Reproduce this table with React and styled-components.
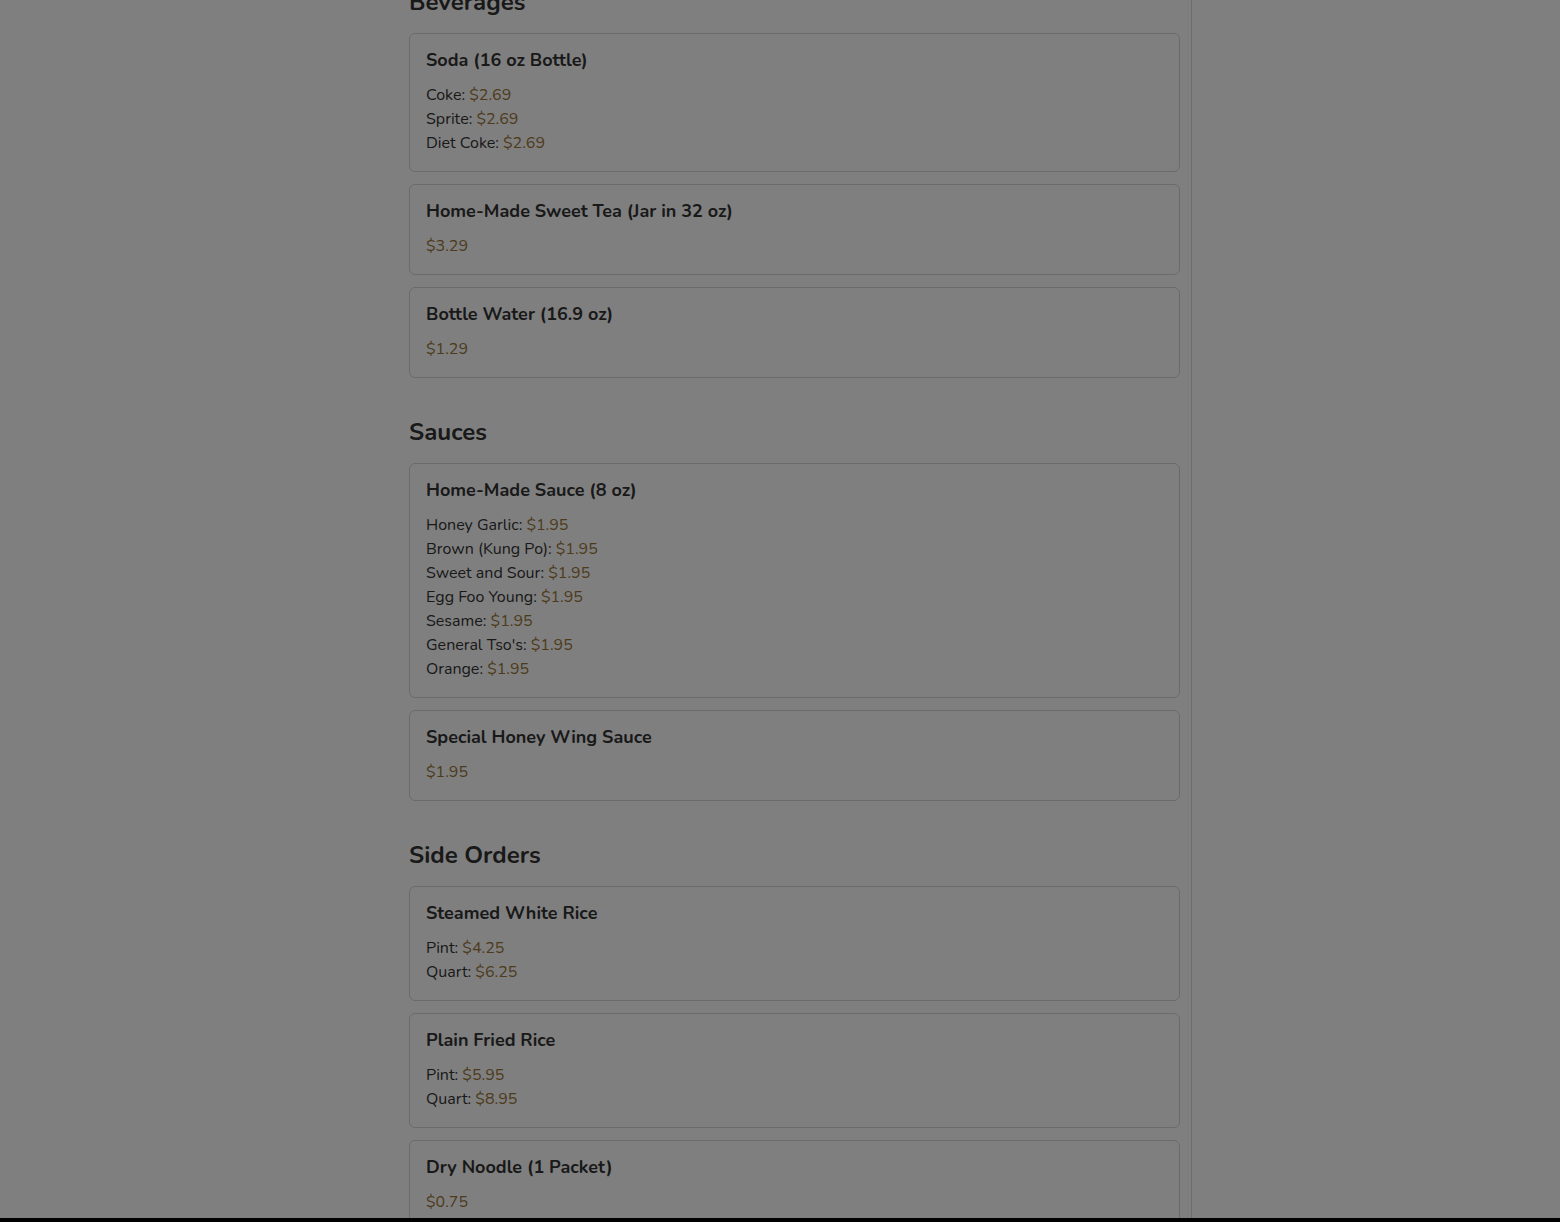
import React from 'react';
import styled, { createGlobalStyle } from 'styled-components';

const GlobalStyle = createGlobalStyle`
  html, body {
    margin: 0;
    padding: 0;
    background: #ffffff;
    overflow: hidden;
  }
  body {
    font-family: 'Nunito', 'Lato', 'Noto Sans', sans-serif;
    color: #333333;
  }
`;

const Page = styled.div`
  display: grid;
  grid-template-columns: 1192px 1fr;
  height: 100vh;
  overflow: hidden;
`;

const Main = styled.main`
  position: relative;
  padding: 0 11px 0 409px;
  border-right: 1px solid #d8d8d8;
  &::after {
    content: '';
    position: absolute;
    top: 0;
    bottom: 0;
    right: 3px;
    width: 1px;
    background: #f6f6f6;
  }
`;

const Menu = styled.div`
  margin-top: -13px;
`;

const Section = styled.section`
  & + & {
    margin-top: 39px;
  }
`;

const SectionTitle = styled.h2`
  margin: 0 0 16px;
  font-size: 24px;
  line-height: 30px;
  font-weight: 700;
  color: #333333;
`;

const CardList = styled.div`
  display: flex;
  flex-direction: column;
  gap: 12px;
`;

const Card = styled.div`
  border: 1px solid #d6d6d6;
  border-radius: 6px;
  padding: 16px;
  background: #ffffff;
`;

const CardTitle = styled.h3`
  margin: 0 0 13px;
  font-size: 18px;
  line-height: 20px;
  font-weight: 700;
  color: #333333;
`;

const Line = styled.div`
  font-size: 16px;
  line-height: 24px;
  color: #333333;
`;

const Price = styled.span`
  color: #9a7638;
`;

const Backdrop = styled.div`
  position: fixed;
  inset: 0;
  background: rgba(0, 0, 0, 0.5);
`;

const BottomBar = styled.div`
  position: fixed;
  left: 0;
  right: 0;
  bottom: 0;
  height: 4px;
  background: #000000;
`;

const sections = [
  {
    title: 'Beverages',
    items: [
      {
        name: 'Soda (16 oz Bottle)',
        options: [
          ['Coke', '$2.69'],
          ['Sprite', '$2.69'],
          ['Diet Coke', '$2.69'],
        ],
      },
      { name: 'Home-Made Sweet Tea (Jar in 32 oz)', price: '$3.29' },
      { name: 'Bottle Water (16.9 oz)', price: '$1.29' },
    ],
  },
  {
    title: 'Sauces',
    items: [
      {
        name: 'Home-Made Sauce (8 oz)',
        options: [
          ['Honey Garlic', '$1.95'],
          ['Brown (Kung Po)', '$1.95'],
          ['Sweet and Sour', '$1.95'],
          ['Egg Foo Young', '$1.95'],
          ['Sesame', '$1.95'],
          ["General Tso's", '$1.95'],
          ['Orange', '$1.95'],
        ],
      },
      { name: 'Special Honey Wing Sauce', price: '$1.95' },
    ],
  },
  {
    title: 'Side Orders',
    items: [
      {
        name: 'Steamed White Rice',
        options: [
          ['Pint', '$4.25'],
          ['Quart', '$6.25'],
        ],
      },
      {
        name: 'Plain Fried Rice',
        options: [
          ['Pint', '$5.95'],
          ['Quart', '$8.95'],
        ],
      },
      { name: 'Dry Noodle (1 Packet)', price: '$0.75' },
    ],
  },
];

const MenuItem = ({ item }) => (
  <Card>
    <CardTitle>{item.name}</CardTitle>
    {item.options ? (
      item.options.map(([label, price]) => (
        <Line key={label}>
          {label}: <Price>{price}</Price>
        </Line>
      ))
    ) : (
      <Line>
        <Price>{item.price}</Price>
      </Line>
    )}
  </Card>
);

export default function App() {
  return (
    <>
      <GlobalStyle />
      <Page>
        <Main>
          <Menu>
            {sections.map((section) => (
              <Section key={section.title}>
                <SectionTitle>{section.title}</SectionTitle>
                <CardList>
                  {section.items.map((item) => (
                    <MenuItem key={item.name} item={item} />
                  ))}
                </CardList>
              </Section>
            ))}
          </Menu>
        </Main>
        <div />
      </Page>
      <Backdrop />
      <BottomBar />
    </>
  );
}
